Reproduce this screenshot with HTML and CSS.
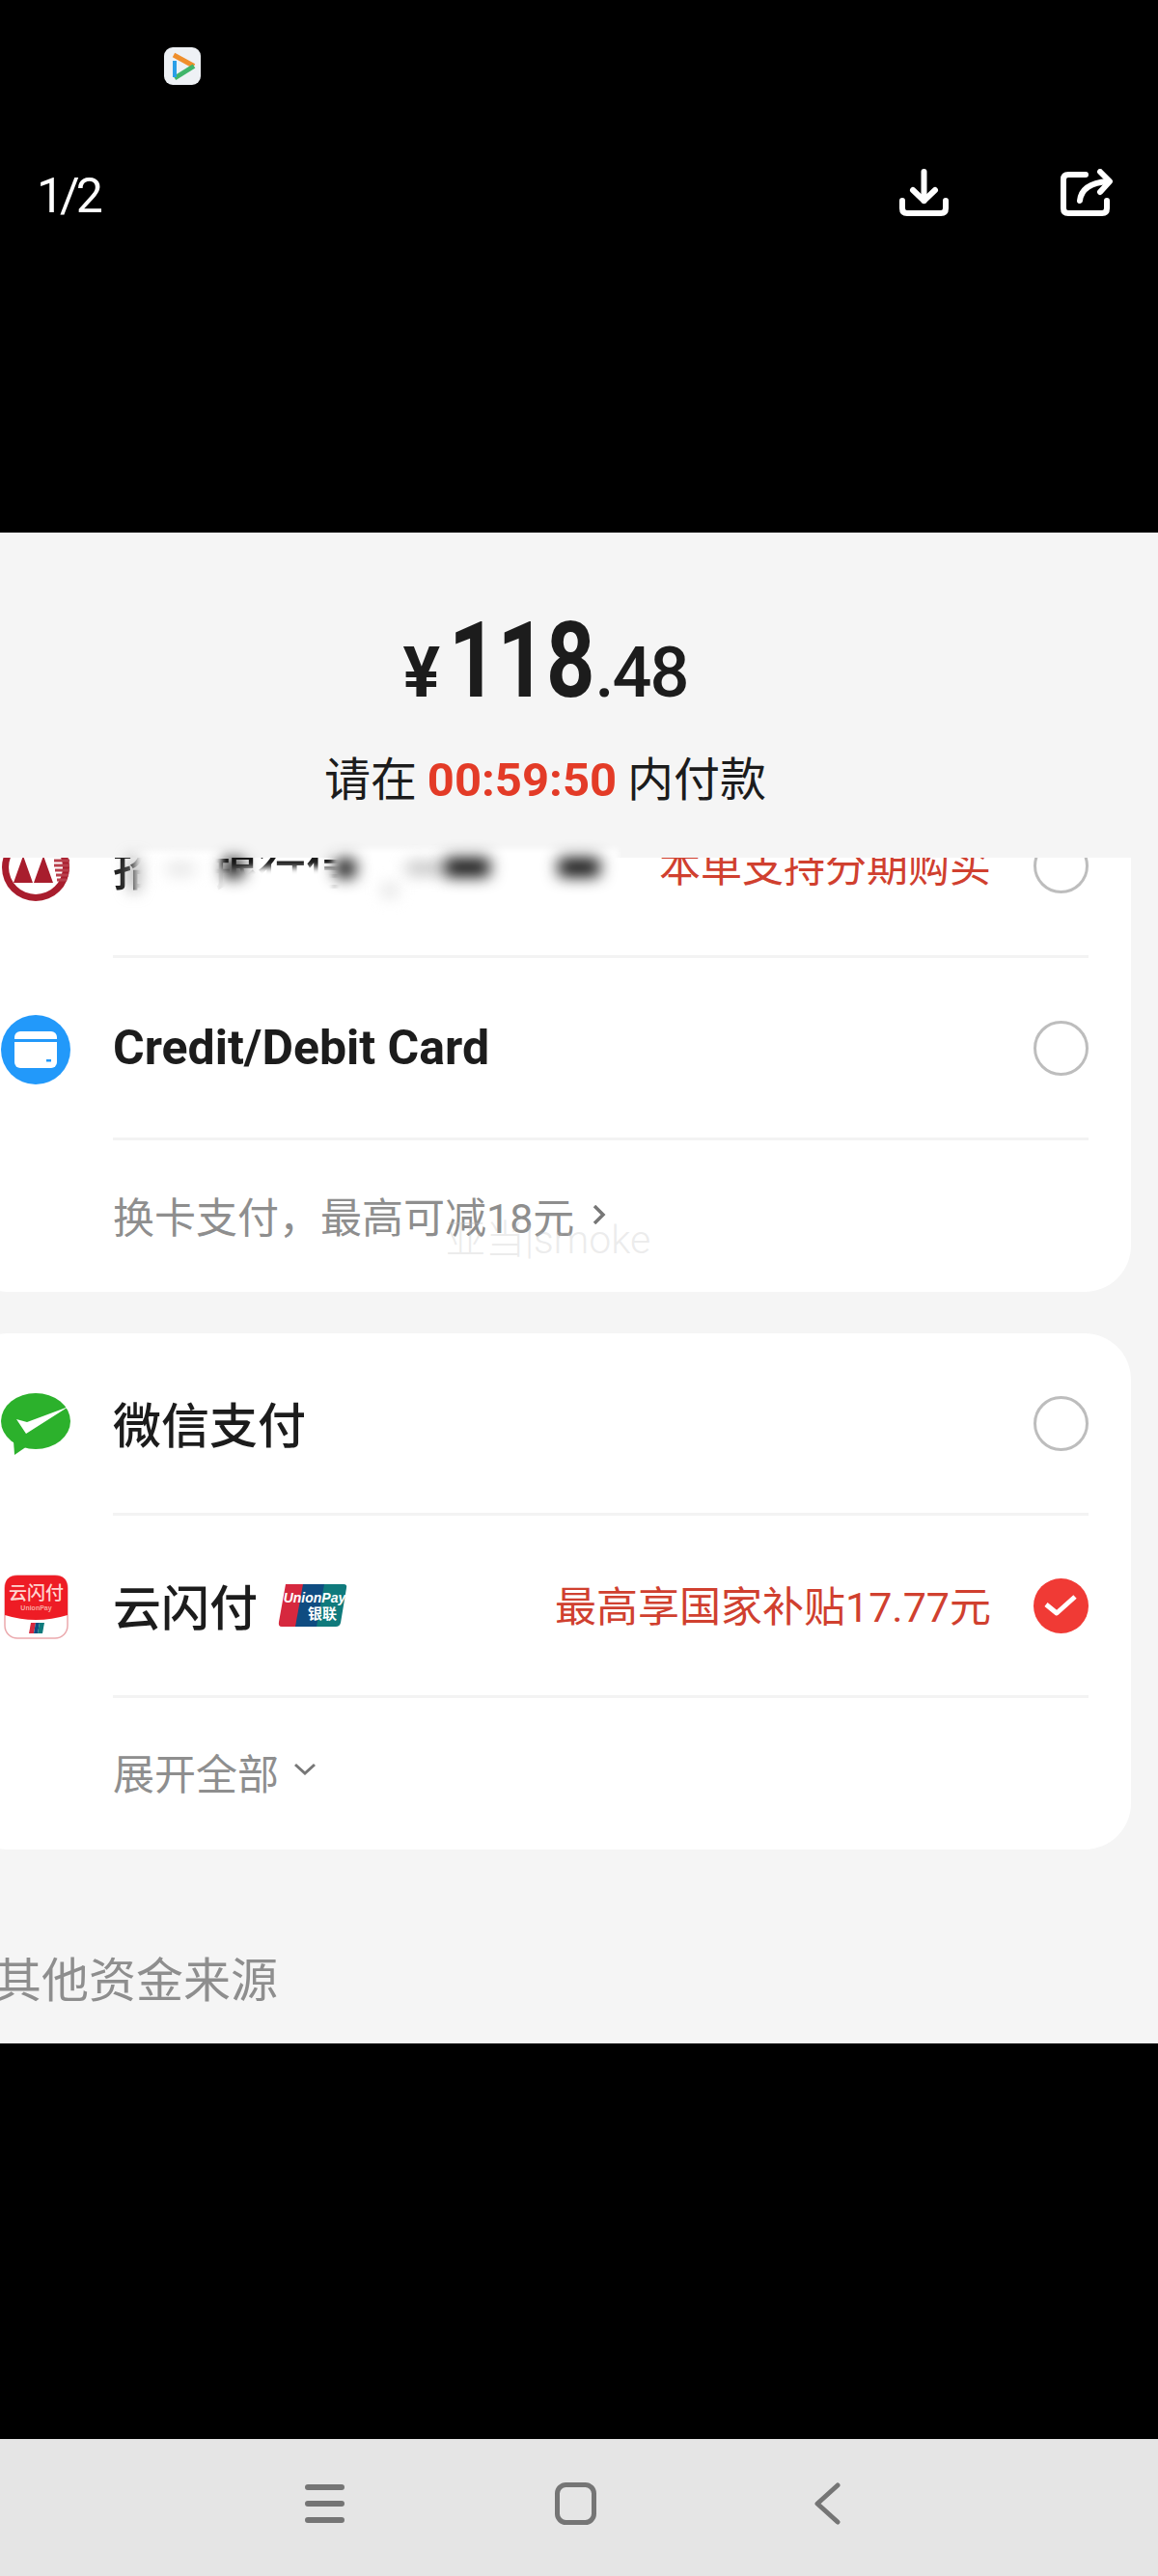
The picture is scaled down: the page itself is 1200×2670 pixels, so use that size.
FILE: index.html
```html
<!DOCTYPE html>
<html>
<head>
<meta charset="utf-8">
<title>Payment</title>
<link rel="stylesheet" href="styles.css">
</head>
<body>
<div id="phone">

<div class="topbar">
  <div class="status">
    <svg class="playIcon" viewBox="0 0 38 39">
      <rect width="38" height="39" rx="9" fill="#eef1f5"/>
      <path d="M10 8 L31 19.500" fill="none" stroke="#ef8f2c" stroke-width="5"/>
      <path d="M31 19.500 L11 32" fill="none" stroke="#3fb56a" stroke-width="5"/>
      <path d="M11 14 V31" fill="none" stroke="#2a9fe8" stroke-width="4"/>
    </svg>
  </div>
  <div class="toolbar">
    <span class="pageNum">1/2</span>
    <svg class="toolIcon" viewBox="0 0 51 50" fill="none" stroke="#fff" stroke-width="6" stroke-linecap="round" stroke-linejoin="round">
      <path d="M25.500 3 V33"/>
      <path d="M14 22 L25.500 33 L37 22"/>
      <path d="M3 33 V41 Q3 46 8 46 H43 Q48 46 48 41 V33"/>
    </svg>
    <svg class="toolIcon shareIcon" viewBox="0 0 54 50" fill="none" stroke="#fff" stroke-width="6" stroke-linecap="round" stroke-linejoin="round">
      <path d="M26 6 H8 Q3 6 3 11 V41 Q3 46 8 46 H43 Q48 46 48 41 V33"/>
      <path d="M20 33 Q22 15 49 13"/>
      <path d="M41 3 L51 13 L41 24"/>
    </svg>
  </div>
</div>

<div class="sheet">
  <div class="summary">
    <div class="amount"><span class="yen">¥</span><span class="big">118</span><span class="cents">.48</span></div>
    <div class="countdown">请在 <b>00:59:50</b> 内付款</div>
  </div>

  <div class="scroller">
    <div class="card firstCard">
      <div class="row">
        <div class="rowIcon">
          <svg class="iconSvg" viewBox="0 0 72 72">
            <circle cx="36" cy="36" r="35" fill="#a81d2d"/>
            <circle cx="36" cy="36" r="28" fill="#fff"/>
            <path d="M13 52 L23 24 L33 52 Z M34 52 L44 24 L54 52 Z" fill="#a81d2d"/>
            <path d="M55 29 H71 M55 34 H71 M56 39 H71 M57 44 H70 M58 49 H68" stroke="#b8404c" stroke-width="3"/>
          </svg>
        </div>
        <div class="rowBody">
          <span class="rowTitle">招商银行信用卡</span>
          <span class="rowNote">本单支持分期购买</span>
          <span class="radio"></span>
        </div>
      </div>
      <div class="row">
        <div class="rowIcon">
          <svg class="iconSvg" viewBox="0 0 72 72">
            <circle cx="36" cy="36" r="36" fill="#2299fa"/>
            <rect x="14" y="17" width="44" height="38" rx="6" fill="#fff"/>
            <rect x="14" y="25" width="44" height="3" fill="#2299fa"/>
            <rect x="47" y="46" width="5" height="2.500" fill="#2299fa"/>
          </svg>
        </div>
        <div class="rowBody">
          <span class="rowTitle strong">Credit/Debit Card</span>
          <span class="radio"></span>
        </div>
      </div>
      <div class="moreRow">换卡支付，最高可减18元
        <svg class="chevRight" viewBox="0 0 14 20" fill="none" stroke="#777" stroke-width="3.500"><path d="M2 1 L11 10 L2 19"/></svg>
      </div>
    </div>

    <div class="card">
      <div class="row">
        <div class="rowIcon">
          <svg class="iconSvg" viewBox="0 0 72 72">
            <ellipse cx="36" cy="32" rx="36" ry="29" fill="#2cb12c"/>
            <path d="M13 52 L14 67 L30 56 Z" fill="#2cb12c"/>
            <path d="M16 30 L26 45 L70 17 L27 33 Z" fill="#fff"/>
          </svg>
        </div>
        <div class="rowBody">
          <span class="rowTitle">微信支付</span>
          <span class="radio"></span>
        </div>
      </div>
      <div class="row">
        <div class="rowIcon">
          <svg class="iconSvg" viewBox="0 0 72 72">
            <rect x="4" y="3" width="65" height="65" rx="13" fill="#fff" stroke="#eba9ad" stroke-width="1.500"/>
            <path d="M4 16 Q4 3 17 3 H56 Q69 3 69 16 V44 Q36 54 4 44 Z" fill="#ee1c25"/>
            <text x="36.500" y="28" text-anchor="middle" class="yunText">云闪付</text>
            <text x="36.500" y="39" text-anchor="middle" class="yunSmall">UnionPay</text>
            <path d="M31 52 H36 L34 63 H29 Z" fill="#d6283e"/>
            <path d="M36 52 H40 L38 63 H34 Z" fill="#0f4c81"/>
            <path d="M40 52 H45 L43 63 H38 Z" fill="#0f7a7c"/>
          </svg>
        </div>
        <div class="rowBody">
          <span class="rowTitle">云闪付</span>
          <svg class="unionLogo" viewBox="0 0 72 44">
            <path d="M8 0 H28 L20 44 H4 Q0 44 1 39 Z" fill="#d6283e"/>
            <path d="M26 0 H50 L42 44 H18 Z" fill="#0f4c81"/>
            <path d="M48 0 H68 Q72 0 71 4 L65 40 Q64 44 60 44 H40 Z" fill="#0f7a7c"/>
            <text x="38" y="19" text-anchor="middle" class="unionText">UnionPay</text>
            <text x="46" y="36" text-anchor="middle" class="unionCn">银联</text>
          </svg>
          <span class="rowNote">最高享国家补贴17.77元</span>
          <span class="radio checked">
            <svg viewBox="0 0 57 57" fill="none" stroke="#fff" stroke-width="5" stroke-linejoin="round"><path d="M13 27 L24 36 L43 19"/></svg>
          </span>
        </div>
      </div>
      <div class="moreRow expand">展开全部
        <svg class="chevDown" viewBox="0 0 22 13" fill="none" stroke="#777" stroke-width="3"><path d="M1 2 L11 11 L21 2"/></svg>
      </div>
    </div>

    <div class="otherLabel">其他资金来源</div>
  </div>

  <div class="mosaic">
    <div class="patch p1"></div>
    <div class="patch p2"></div>
    <div class="patch p3"></div>
    <div class="blob b1"></div>
    <div class="blob b2"></div>
    <div class="blob b3"></div>
    <div class="blob b4"></div>
    <div class="blob b5"></div>
    <div class="blob b6"></div>
    <div class="blob b7"></div>
    <div class="blob b8"></div>
  </div>
  <div class="watermark">亚当|smoke</div>
</div>

<div class="blackGap"></div>

<div class="navbar">
  <svg class="navMenu" viewBox="0 0 41 40" fill="none" stroke="#757575" stroke-width="6" stroke-linecap="round"><path d="M3 3 H38 M3 20 H38 M3 37 H38"/></svg>
  <svg class="navHome" viewBox="0 0 43 44" fill="none" stroke="#757575" stroke-width="5"><rect x="2.500" y="2.500" width="38" height="39" rx="9"/></svg>
  <svg class="navBack" viewBox="0 0 28 44" fill="none" stroke="#757575" stroke-width="5" stroke-linecap="round" stroke-linejoin="round"><path d="M25 3 L4 22 L25 41"/></svg>
</div>

</div>
</body>
</html>
```

FILE: styles.css
```css
html, body { margin: 0; padding: 0; background: #000; }
body { font-family: Roboto, "Noto Sans CJK SC", sans-serif; color: #1c1c1c; }
#phone { width: 1200px; height: 2670px; overflow: hidden; display: flex; flex-direction: column; background: #000; }

/* top black bar */
.topbar { height: 552px; flex: none; }
.status { height: 175px; padding: 49px 0 0 170px; box-sizing: border-box; }
.playIcon { display: block; width: 38px; height: 39px; }
.toolbar { display: flex; align-items: flex-start; padding-left: 38px; }
.pageNum { color: #fff; font-size: 50px; line-height: 56px; font-weight: 400; width: 894px; letter-spacing: -4px; }
.toolIcon { display: block; width: 51px; height: 50px; }
.shareIcon { width: 54px; margin-left: 116px; }

/* grey sheet */
.sheet { position: relative; height: 1566px; flex: none; background: #f5f5f5; overflow: hidden; }
.summary { height: 337px; box-sizing: border-box; padding: 79px 70px 0 0; text-align: center; }
.amount { height: 108px; line-height: 108px; font-weight: 700; white-space: nowrap; }
.yen { font-size: 72px; margin-right: 9px; }
.big { display: inline-block; font-size: 110px; transform: scaleX(0.8); margin: 0 -19px; }
.cents { font-size: 72px; font-weight: 500; letter-spacing: -2px; }
.countdown { margin-top: 40px; font-size: 48px; line-height: 60px; word-spacing: -1px; }
.countdown b { color: #e33b27; font-weight: 700; font-size: 49px; }

.scroller { height: 1229px; overflow: hidden; }
.card { background: #fff; margin-left: -40px; width: 1212px; border-radius: 48px; margin-bottom: 43px; }
.firstCard { margin-top: -85px; }

.row { display: flex; height: 189px; }
.rowIcon { width: 157px; flex: none; display: flex; align-items: center; padding-left: 41px; box-sizing: border-box; }
.iconSvg { display: block; width: 72px; height: 72px; }
.rowBody { flex: 1; display: flex; align-items: center; margin-right: 44px; border-bottom: 3px solid #f3f3f3; }
.rowTitle { font-size: 50px; font-weight: 500; color: #1c1c1c; white-space: nowrap; margin-bottom: 2px; }
.strong { font-size: 50px; font-weight: 700; margin-bottom: 0; }
.rowNote { margin-left: auto; font-size: 43px; color: #d0402f; white-space: nowrap; margin-bottom: 4px; }
.radio { flex: none; width: 57px; height: 57px; box-sizing: border-box; border: 3px solid #bdbdbd; border-radius: 50%; margin-left: 44px; }
.rowTitle + .radio { margin-left: auto; }
.radio.checked { border: none; background: #f03a35; }
.radio.checked svg { display: block; width: 57px; height: 57px; }

.unionLogo { display: block; width: 72px; height: 44px; margin-left: 21px; }
.unionText { font-family: "Liberation Sans", sans-serif; font-size: 14px; font-style: italic; font-weight: 700; fill: #fff; }
.unionCn { font-family: "Noto Sans CJK SC", sans-serif; font-size: 15px; font-weight: 700; fill: #fff; }
.yunText { font-family: "Noto Sans CJK SC", sans-serif; font-size: 19px; font-weight: 500; fill: #ffd5d0; }
.yunSmall { font-family: "Liberation Sans", sans-serif; font-size: 7px; font-weight: 700; fill: #f8a8a0; }

.moreRow { height: 157px; padding: 0 0 4px 157px; box-sizing: border-box; display: flex; align-items: center; font-size: 43px; color: #8e8e8e; white-space: nowrap; }
.moreRow.expand { padding-bottom: 6px; }
.chevRight { display: block; width: 14px; height: 20px; margin-left: 19px; }
.chevDown { display: block; width: 22px; height: 13px; margin: 0 0 4px 16px; }
.otherLabel { font-size: 49px; line-height: 60px; color: #8e8e8e; margin: 107px 0 0 -6px; white-space: nowrap; }

/* blurred part of the screenshot */
.mosaic { position: absolute; left: 0; top: 328px; width: 700px; height: 100px; pointer-events: none; }
.patch { position: absolute; background: #fff; filter: blur(3px); }
.p1 { left: 140px; top: 2px; width: 90px; height: 68px; }
.p2 { left: 226px; top: 19px; width: 122px; height: 50px; }
.p3 { left: 345px; top: 0; width: 295px; height: 68px; }
.blob { position: absolute; background: #111; filter: blur(8px); border-radius: 6px; }
.b1 { left: 134px; top: 8px; width: 10px; height: 36px; background: #999; }
.b2 { left: 172px; top: 16px; width: 30px; height: 10px; background: #ddd; }
.b3 { left: 231px; top: 10px; width: 22px; height: 20px; }
.b4 { left: 347px; top: 10px; width: 22px; height: 20px; }
.b5 { left: 420px; top: 14px; width: 40px; height: 12px; background: #bbb; }
.b6 { left: 460px; top: 9px; width: 48px; height: 20px; }
.b7 { left: 578px; top: 9px; width: 44px; height: 20px; }
.b8 { left: 396px; top: 36px; width: 16px; height: 14px; background: #ddd; }

.watermark { position: absolute; left: 462px; top: 708px; font-size: 41px; font-weight: 300; line-height: 50px; color: rgba(190,190,190,0.3); white-space: nowrap; }

.blackGap { height: 410px; flex: none; background: #000; }

/* system nav */
.navbar { flex: 1; background: #e5e5e5; display: flex; align-items: flex-start; padding: 47px 0 0 316px; box-sizing: border-box; }
.navMenu { display: block; width: 41px; height: 40px; }
.navHome { display: block; width: 43px; height: 44px; margin: -2px 0 0 218px; }
.navBack { display: block; width: 28px; height: 44px; margin: -2px 0 0 225px; }
```
